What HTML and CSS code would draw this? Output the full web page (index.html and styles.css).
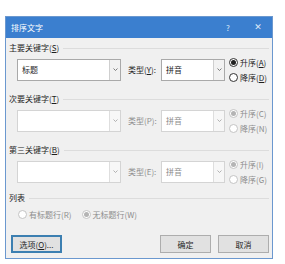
FILE: index.html
```html
<!DOCTYPE html>
<html lang="zh-CN">
<head>
    <meta charset="UTF-8">
    <meta name="viewport" content="width=device-width, initial-scale=1.0">
    <title>排序文字</title>
    <link rel="stylesheet" href="styles.css">
</head>
<body>

<div class="dialog">
    <!-- 标题栏 -->
    <div class="title-bar">
        <span class="title">排序文字</span>
        <span class="title-btn help">?</span>
        <span class="title-btn close">✕</span>
    </div>

    <div class="content">
        <!-- 主要关键字 -->
        <div class="group-head"><span>主要关键字(<u>S</u>)</span></div>
        <div class="key-row">
            <div class="combo wide">
                <span class="combo-text">标题</span>
                <span class="combo-btn"><svg viewBox="0 0 5 3"><path d="M0.5 0.5L2.5 2.5L4.5 0.5"/></svg></span>
            </div>
            <span class="type-label">类型(<u>Y</u>):</span>
            <div class="combo narrow">
                <span class="combo-text">拼音</span>
                <span class="combo-btn"><svg viewBox="0 0 5 3"><path d="M0.5 0.5L2.5 2.5L4.5 0.5"/></svg></span>
            </div>
            <div class="order">
                <div class="radio checked"><span class="dot"></span>升序(<u>A</u>)</div>
                <div class="radio"><span class="dot"></span>降序(<u>D</u>)</div>
            </div>
        </div>

        <!-- 次要关键字 -->
        <div class="group-head"><span>次要关键字(<u>T</u>)</span></div>
        <div class="key-row disabled">
            <div class="combo wide">
                <span class="combo-text"></span>
                <span class="combo-btn"><svg viewBox="0 0 5 3"><path d="M0.5 0.5L2.5 2.5L4.5 0.5"/></svg></span>
            </div>
            <span class="type-label">类型(P):</span>
            <div class="combo narrow">
                <span class="combo-text">拼音</span>
                <span class="combo-btn"><svg viewBox="0 0 5 3"><path d="M0.5 0.5L2.5 2.5L4.5 0.5"/></svg></span>
            </div>
            <div class="order">
                <div class="radio checked"><span class="dot"></span>升序(C)</div>
                <div class="radio"><span class="dot"></span>降序(N)</div>
            </div>
        </div>

        <!-- 第三关键字 -->
        <div class="group-head"><span>第三关键字(<u>B</u>)</span></div>
        <div class="key-row disabled">
            <div class="combo wide">
                <span class="combo-text"></span>
                <span class="combo-btn"><svg viewBox="0 0 5 3"><path d="M0.5 0.5L2.5 2.5L4.5 0.5"/></svg></span>
            </div>
            <span class="type-label">类型(E):</span>
            <div class="combo narrow">
                <span class="combo-text">拼音</span>
                <span class="combo-btn"><svg viewBox="0 0 5 3"><path d="M0.5 0.5L2.5 2.5L4.5 0.5"/></svg></span>
            </div>
            <div class="order">
                <div class="radio checked"><span class="dot"></span>升序(I)</div>
                <div class="radio"><span class="dot"></span>降序(G)</div>
            </div>
        </div>

        <!-- 列表 -->
        <div class="group-head list-head"><span>列表</span></div>
        <div class="list-row disabled">
            <div class="radio"><span class="dot"></span>有标题行(R)</div>
            <div class="radio checked"><span class="dot"></span>无标题行(W)</div>
        </div>

        <!-- 按钮 -->
        <div class="buttons">
            <button class="btn focus">选项(<u>O</u>)...</button>
            <span class="spacer"></span>
            <button class="btn">确定</button>
            <button class="btn">取消</button>
        </div>
    </div>
</div>

</body>
</html>
```

FILE: styles.css
```css
* {
    margin: 0;
    padding: 0;
    box-sizing: border-box;
}

body {
    background-color: #ffffff;
    font-family: "Noto Sans CJK SC", "Noto Sans", sans-serif;
    font-size: 8px;
    color: #1e1e1e;
}

u {
    text-decoration: underline;
    text-underline-offset: 1px;
}

/* 对话框 */
.dialog {
    width: 268px;
    margin: 16px 0 0 5px;
    border: 1px solid #6b98cf;
    background-color: #f0f0f0;
}

.title-bar {
    height: 21px;
    background-color: #3b7fcf;
    color: #ffffff;
    display: flex;
    align-items: center;
    padding-left: 5px;
}

.title {
    flex: 1;
    line-height: 1;
}

.title-btn {
    width: 28px;
    text-align: center;
    line-height: 1;
    color: #dce8f7;
}

.help {
    font-size: 8px;
    margin-right: 2px;
}

.close {
    font-size: 9px;
    font-family: "DejaVu Sans", sans-serif;
}

.content {
    padding: 4px 3px 5px 2px;
}

/* 分组标题 */
.group-head {
    height: 12px;
    display: flex;
    align-items: center;
    padding-left: 1px;
    line-height: 12px;
}

.group-head::after {
    content: "";
    flex: 1;
    height: 1px;
    margin-left: 4px;
    background-color: #dcdcdc;
}

.key-row {
    height: 31px;
    display: flex;
    align-items: center;
    padding-left: 9px;
    margin-bottom: 8px;
}

/* 下拉框 */
.combo {
    height: 22px;
    display: flex;
    background-color: #ffffff;
    border: 1px solid #a9a9a9;
}

.combo.wide {
    width: 104px;
}

.combo.narrow {
    width: 64px;
}

.combo-text {
    flex: 1;
    padding-left: 4px;
    line-height: 20px;
}

.combo-btn {
    width: 11px;
    border-left: 1px solid #cfcfcf;
    background-color: #f2f2f2;
    display: flex;
    align-items: center;
    justify-content: center;
}

.combo-btn svg {
    width: 5px;
    height: 3px;
    fill: none;
    stroke: #606060;
    stroke-width: 0.8;
}

.type-label {
    width: 33px;
    margin-left: 7px;
}

.order {
    margin-left: 4px;
    display: flex;
    flex-direction: column;
}

/* 单选按钮 */
.radio {
    height: 15px;
    display: flex;
    align-items: center;
    white-space: nowrap;
}

.radio .dot {
    width: 9px;
    height: 9px;
    border-radius: 50%;
    border: 1px solid #333333;
    background-color: #ffffff;
    margin-right: 2px;
    display: flex;
    align-items: center;
    justify-content: center;
}

.radio.checked .dot::after {
    content: "";
    width: 5px;
    height: 5px;
    border-radius: 50%;
    background-color: #222222;
}

/* 禁用状态 */
.disabled {
    color: #8d8d8d;
}

.disabled .combo {
    border-color: #d4d4d4;
}

.disabled .combo-btn {
    border-left-color: #dedede;
    background-color: #f7f7f7;
}

.disabled .combo-btn svg {
    stroke: #a0a0a0;
}

.disabled .radio .dot {
    border-color: #c4c4c4;
}

.disabled .radio.checked .dot::after {
    background-color: #b4b4b4;
}

.list-head {
    margin-top: -3px;
}

.list-row {
    height: 14px;
    display: flex;
    align-items: center;
    padding-left: 10px;
    margin-top: 3px;
    gap: 10px;
}

/* 按钮 */
.buttons {
    display: flex;
    margin-top: 14px;
    padding-left: 3px;
}

.spacer {
    flex: 1;
}

.btn {
    width: 51px;
    height: 18px;
    font-family: inherit;
    font-size: 8px;
    color: #1e1e1e;
    background-color: #e1e1e1;
    border: 1px solid #adadad;
    margin-left: 7px;
}

.btn.focus {
    margin-left: 0;
    border: 2px solid #3c7fb1;
}
```
